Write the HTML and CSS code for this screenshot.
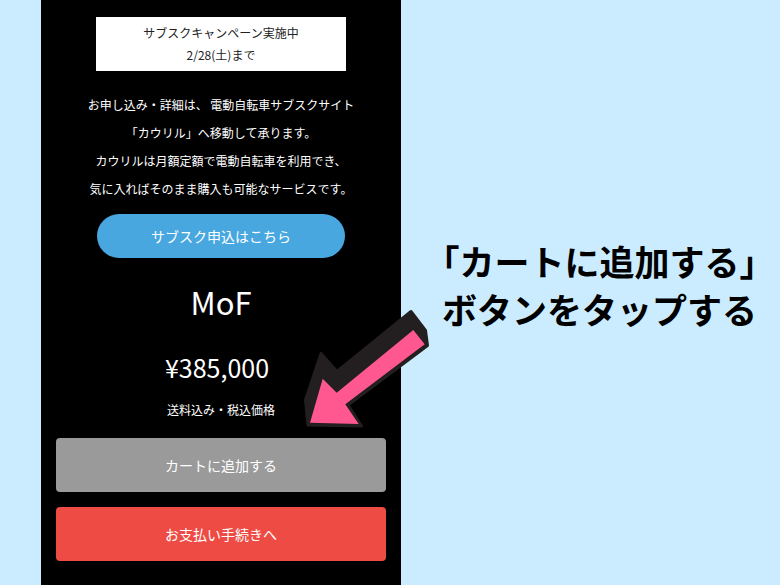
FILE: index.html
```html
<!DOCTYPE html>
<html lang="ja">
<head>
<meta charset="utf-8">
<meta name="viewport" content="width=device-width, initial-scale=1">
<title>カートに追加する</title>
<link rel="stylesheet" href="styles.css">
</head>
<body>
<div class="page">
  <main class="product">
    <p class="campaign">サブスクキャンペーン実施中<br>2/28(土)まで</p>
    <p class="details">お申し込み・詳細は、 電動自転車サブスクサイト<br>「カウリル」へ移動して承ります。<br>カウリルは月額定額で電動自転車を利用でき、<br>気に入ればそのまま購入も可能なサービスです。</p>
    <a class="subscribe" href="#">サブスク申込はこちら</a>
    <h1 class="name">MoF</h1>
    <p class="price">¥385,000</p>
    <p class="note">送料込み・税込価格</p>
    <div class="actions">
      <button class="action cart" type="button">カートに追加する</button>
      <button class="action checkout" type="button">お支払い手続きへ</button>
    </div>
    <svg class="arrow" viewBox="0 0 132 126" aria-hidden="true">
      <path fill="#231f20" stroke="#231f20" stroke-width="3" stroke-linejoin="round" d="M111 6.5 125.5 25.5 127.5 40.5 48 100 61.5 121 8 120 5.5 95 21 48.5 37 66.5Z"/>
      <path fill="#ff5790" d="M113.3 25 124.7 39.3 45.3 99.3 58.7 119 10 117.7 22.7 73.7 36.7 87.7Z"/>
    </svg>
  </main>
  <aside class="guide">
    <h2 class="instruction">「カートに追加する」<br>ボタンをタップする</h2>
  </aside>
</div>
</body>
</html>
```

FILE: styles.css
```css
* {
  box-sizing: border-box;
}

body {
  margin: 0;
  background: #cbecff;
  color: #000;
  font-family: "Noto Sans CJK JP", sans-serif;
}

h1,
h2,
p {
  margin: 0;
  font-weight: 400;
}

.page {
  display: grid;
  grid-template-columns: 360fr 379fr;
  min-height: 100vh;
  padding-left: 41px;
}

.product {
  position: relative;
  display: flex;
  flex-direction: column;
  align-items: center;
  padding: 17px 15px;
  background: #000;
  color: #fff;
  text-align: center;
}

.campaign {
  width: 76%;
  padding: 5px 0;
  background: #fff;
  color: #222;
  font-size: 12px;
  line-height: 22px;
}

.details {
  margin-top: 20px;
  font-size: 12px;
  line-height: 28px;
  white-space: nowrap;
}

.subscribe {
  width: 75%;
  margin-top: 11px;
  border-radius: 22px;
  background: #48a7df;
  color: #fff;
  font-size: 14px;
  line-height: 44px;
  text-decoration: none;
}

.name {
  margin-top: 22px;
  font-size: 31px;
  line-height: 44px;
}

.price {
  margin-top: 24px;
  padding-right: 8px;
  font-size: 25px;
  line-height: 38px;
}

.note {
  margin-top: 13px;
  font-size: 12px;
  line-height: 22px;
}

.actions {
  display: grid;
  gap: 15px;
  width: 100%;
  margin-top: 17px;
}

.action {
  padding: 0;
  border: 0;
  border-radius: 4px;
  color: #fff;
  font-family: inherit;
  font-size: 14px;
  line-height: 54px;
}

.cart {
  background: #9a9a9a;
}

.checkout {
  background: #ee4b44;
}

.arrow {
  position: absolute;
  top: 305px;
  right: -31px;
  width: 132px;
  height: 126px;
}

.guide {
  display: flex;
  align-items: center;
  justify-content: center;
  padding: 0 0 16px 18px;
}

.instruction {
  font-size: 35px;
  font-weight: 700;
  line-height: 48px;
  text-align: center;
  white-space: nowrap;
}
```
